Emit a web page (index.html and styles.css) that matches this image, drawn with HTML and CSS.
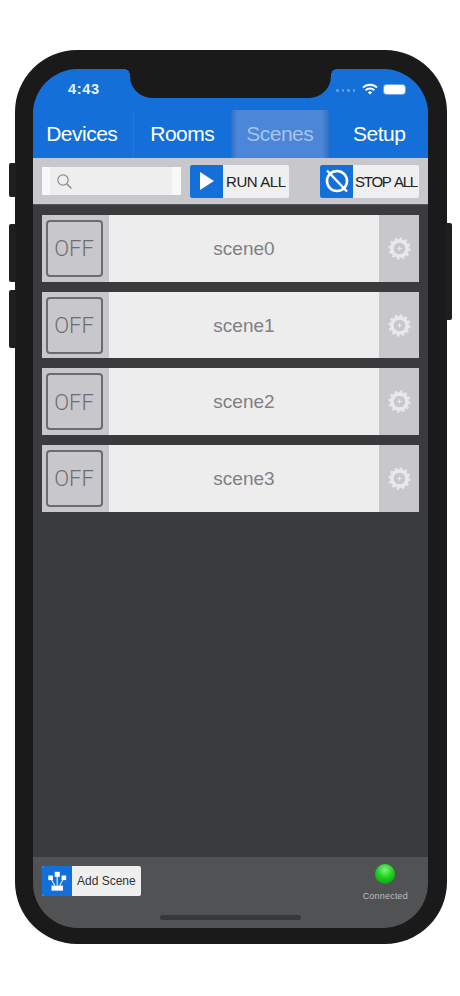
FILE: index.html
```html
<!DOCTYPE html>
<html lang="en">
<head>
    <meta charset="UTF-8">
    <meta name="viewport" content="width=device-width, initial-scale=1.0">
    <title>Scenes</title>
    <link rel="stylesheet" href="styles.css">
</head>
<body>
    <svg class="defs" width="0" height="0">
        <symbol id="gear" viewBox="0 0 26 26">
            <circle cx="13" cy="13" r="11.4" fill="none" stroke="#e9e9eb" stroke-width="2.2" stroke-dasharray="2.9 3.06"/>
            <circle cx="13" cy="13" r="8.6" fill="none" stroke="#e9e9eb" stroke-width="4"/>
            <path d="M13 9.5l.8 2.7 2.7.8-2.7.8-.8 2.7-.8-2.7-2.7-.8 2.7-.8z" fill="#e9e9eb"/>
        </symbol>
    </svg>

    <div class="phone">
        <span class="side-btn side-mute"></span>
        <span class="side-btn side-up"></span>
        <span class="side-btn side-down"></span>
        <span class="side-btn side-power"></span>

        <div class="screen">
            <div class="notch"></div>

            <div class="header">
                <div class="status-bar">
                    <span class="time">4:43</span>
                    <div class="status-icons">
                        <span class="signal"><i></i><i></i><i></i><i></i></span>
                        <svg width="16" height="12" viewBox="0 0 16 12">
                            <path d="M1 4.6a10 10 0 0 1 14 0" fill="none" stroke="#fff" stroke-width="1.9"/>
                            <path d="M3.6 7.2a6.4 6.4 0 0 1 8.8 0" fill="none" stroke="#fff" stroke-width="1.9"/>
                            <path d="M8 11.6L5.9 9.4a3 3 0 0 1 4.2 0z" fill="#fff"/>
                        </svg>
                        <span class="battery"></span>
                    </div>
                </div>
                <div class="tabs">
                    <div class="tab">Devices</div>
                    <div class="tab">Rooms</div>
                    <div class="tab tab-active">Scenes</div>
                    <div class="tab">Setup</div>
                </div>
            </div>

            <div class="toolbar">
                <div class="search">
                    <div class="search-inner">
                        <svg width="17" height="17" viewBox="0 0 17 17">
                            <circle cx="7" cy="7" r="5.2" fill="none" stroke="#8a8a8e" stroke-width="1.2"/>
                            <path d="M10.8 10.8l4.6 4.6" stroke="#8a8a8e" stroke-width="1.4"/>
                        </svg>
                    </div>
                </div>
                <div class="action-btn">
                    <span class="action-icon">
                        <svg width="16" height="20" viewBox="0 0 16 20"><path d="M1 1l14 9-14 9z" fill="#fff"/></svg>
                    </span>
                    <span class="action-label">RUN ALL</span>
                </div>
                <div class="action-btn action-stop">
                    <span class="action-icon">
                        <svg width="26" height="26" viewBox="0 0 26 26">
                            <circle cx="13" cy="13" r="10" fill="none" stroke="#fff" stroke-width="2.6"/>
                            <path d="M3 2.5l20 21" stroke="#fff" stroke-width="2.4"/>
                        </svg>
                    </span>
                    <span class="action-label">STOP ALL</span>
                </div>
            </div>

            <div class="scene-list">
                <div class="scene-row">
                    <div class="scene-toggle"><span class="off-btn">OFF</span></div>
                    <div class="scene-name">scene0</div>
                    <div class="scene-gear"><svg width="23" height="23"><use href="#gear"/></svg></div>
                </div>
                <div class="scene-row">
                    <div class="scene-toggle"><span class="off-btn">OFF</span></div>
                    <div class="scene-name">scene1</div>
                    <div class="scene-gear"><svg width="23" height="23"><use href="#gear"/></svg></div>
                </div>
                <div class="scene-row">
                    <div class="scene-toggle"><span class="off-btn">OFF</span></div>
                    <div class="scene-name">scene2</div>
                    <div class="scene-gear"><svg width="23" height="23"><use href="#gear"/></svg></div>
                </div>
                <div class="scene-row">
                    <div class="scene-toggle"><span class="off-btn">OFF</span></div>
                    <div class="scene-name">scene3</div>
                    <div class="scene-gear"><svg width="23" height="23"><use href="#gear"/></svg></div>
                </div>
            </div>

            <div class="footer">
                <div class="add-btn">
                    <span class="add-icon">
                        <svg width="22" height="22" viewBox="0 0 24 24" fill="#fff">
                            <rect x="9.5" y="2" width="5.5" height="5.5"/>
                            <rect x="2.5" y="6" width="5" height="5"/>
                            <rect x="17" y="6" width="5" height="5"/>
                            <rect x="6" y="17" width="12.5" height="5.5"/>
                            <path d="M12.2 7v10M6 10.5l3.5 6.5M18.5 10.5l-3.5 6.5" stroke="#fff" stroke-width="1.1"/>
                        </svg>
                    </span>
                    <span class="add-label">Add Scene</span>
                </div>
                <div class="conn">
                    <span class="led"></span>
                    <span class="conn-label">Connected</span>
                </div>
                <div class="home-bar"></div>
            </div>
        </div>
    </div>
</body>
</html>
```

FILE: styles.css
```css
html, body {
    margin: 0;
    padding: 0;
}
body {
    width: 460px;
    height: 996px;
    overflow: hidden;
    background: #fff;
    font-family: "Liberation Sans", Arial, sans-serif;
}
.defs {
    position: absolute;
}

/* phone shell */
.phone {
    position: relative;
    box-sizing: border-box;
    width: 432px;
    height: 894px;
    margin: 50px 0 0 15px;
    padding: 19px 19px 16px 18px;
    background: #1a1a1a;
    border-radius: 62px;
}
.side-btn {
    position: absolute;
    width: 7px;
    background: #1f1f1f;
    border-radius: 2px 0 0 2px;
}
.side-mute { left: -6px; top: 113px; height: 34px; }
.side-up { left: -6px; top: 174px; height: 58px; }
.side-down { left: -6px; top: 240px; height: 58px; }
.side-power { right: -5px; top: 173px; height: 97px; border-radius: 0 2px 2px 0; }

.screen {
    position: relative;
    display: flex;
    flex-direction: column;
    height: 859px;
    overflow: hidden;
    border-radius: 45px;
    background: #3a3b3d;
}
.notch {
    position: absolute;
    top: 0;
    left: 97px;
    width: 201px;
    height: 29px;
    background: #1a1a1a;
    border-radius: 0 0 22px 22px;
}
.notch::before, .notch::after {
    content: "";
    position: absolute;
    top: 0;
    width: 6px;
    height: 6px;
    background: radial-gradient(circle at 0 100%, transparent 6px, #1a1a1a 6px);
}
.notch::before { left: -6px; }
.notch::after {
    right: -6px;
    background: radial-gradient(circle at 100% 100%, transparent 6px, #1a1a1a 6px);
}

/* blue header */
.header {
    background: #1470d8;
    color: #fff;
}
.status-bar {
    display: flex;
    justify-content: space-between;
    align-items: center;
    height: 41px;
    padding: 0 21px 1px 35px;
    box-sizing: border-box;
}
.time {
    font-size: 14.5px;
    font-weight: bold;
    letter-spacing: .7px;
    opacity: .92;
}
.status-icons {
    display: flex;
    align-items: center;
    gap: 6px;
}
.signal {
    display: flex;
    gap: 3px;
    margin-top: 3px;
    margin-right: 1px;
}
.signal i {
    width: 2.5px;
    height: 2.5px;
    border-radius: 50%;
    background: #5f9fe6;
}
.battery {
    position: relative;
    width: 21px;
    height: 9px;
    background: #fff;
    border-radius: 3px;
    margin-right: 2px;
    box-shadow: 0 0 0 1px #6aa5e8;
}
.tabs {
    display: flex;
    height: 48px;
}
.tab {
    flex: 1;
    display: flex;
    align-items: center;
    justify-content: center;
    font-size: 21px;
    letter-spacing: -.5px;
}
.tab:first-child {
    padding-right: 2px;
    border-right: 1px solid rgba(255,255,255,.06);
}
.tab:last-child {
    padding-left: 2px;
}
.tab-active {
    color: #a9c3e6;
    background: linear-gradient(90deg, #2f6fc0 0, #4b86d8 6px, #4b86d8 91px, #2f6fc0 100%);
}

/* toolbar */
.toolbar {
    display: flex;
    align-items: center;
    height: 47px;
    padding: 0 9px;
    background: #c8c8cc;
    border-bottom: 1px solid #55565a;
    box-sizing: border-box;
}
.search {
    box-sizing: border-box;
    width: 139px;
    height: 28px;
    padding: 0 9px 0 8px;
    background: #f8f8f9;
    margin-right: 9px;
}
.search-inner {
    display: flex;
    align-items: center;
    height: 100%;
    padding-left: 6px;
    background: #eeeeef;
}
.action-btn {
    display: flex;
    align-items: center;
    width: 99px;
    height: 33px;
    background: #efeff0;
    border-radius: 2px;
    overflow: hidden;
}
.action-stop {
    margin-left: 31px;
}
.action-icon {
    flex: none;
    display: flex;
    align-items: center;
    justify-content: center;
    width: 33px;
    height: 100%;
    background: #1470d8;
}
.action-label {
    margin-left: 3px;
    font-size: 15px;
    letter-spacing: -.4px;
    color: #222;
    white-space: nowrap;
}
.action-stop .action-label {
    margin-left: 2px;
    letter-spacing: -1.25px;
    word-spacing: 1.5px;
}

/* scene rows */
.scene-list {
    flex: 1;
    display: flex;
    flex-direction: column;
    gap: 10px;
    padding: 10px 9px 0;
}
.scene-row {
    display: flex;
    height: 66.7px;
    background: #ededee;
}
.scene-toggle {
    flex: none;
    display: flex;
    align-items: center;
    justify-content: center;
    box-sizing: border-box;
    width: 67px;
    padding-right: 3px;
    background: #c8c8cc;
}
.off-btn {
    box-sizing: border-box;
    display: flex;
    align-items: center;
    justify-content: center;
    width: 57px;
    height: 57px;
    border: 2px solid #6c6c70;
    border-radius: 4px;
    padding-top: 1px;
    font-family: Roboto, "Liberation Sans", sans-serif;
    font-weight: 300;
    font-size: 22px;
    color: #6e6e72;
}
.scene-name {
    flex: 1;
    display: flex;
    align-items: center;
    justify-content: center;
    padding-top: 1px;
    font-size: 19px;
    color: #808084;
}
.scene-gear {
    flex: none;
    display: flex;
    align-items: center;
    justify-content: center;
    width: 40px;
    background: #c8c8cc;
}

/* footer */
.footer {
    position: relative;
    display: flex;
    justify-content: space-between;
    align-items: flex-start;
    height: 71px;
    padding: 9px 20px 0 9px;
    box-sizing: border-box;
    background: #505254;
}
.add-btn {
    display: flex;
    align-items: center;
    width: 99px;
    height: 30px;
    background: #efeff0;
    border-radius: 2px;
    overflow: hidden;
}
.add-icon {
    flex: none;
    display: flex;
    align-items: center;
    justify-content: center;
    width: 30px;
    height: 100%;
    background: #1470d8;
}
.add-label {
    margin-left: 5px;
    font-size: 12px;
    color: #333;
    white-space: nowrap;
}
.conn {
    display: flex;
    flex-direction: column;
    align-items: center;
    gap: 7px;
    margin-top: -2px;
}
.led {
    width: 20px;
    height: 20px;
    border-radius: 50%;
    background: radial-gradient(circle at 50% 30%, #7df57d 0, #1fd01f 45%, #0b8f14 100%);
}
.conn-label {
    font-size: 9px;
    letter-spacing: .2px;
    color: #bdbdbf;
}
.home-bar {
    position: absolute;
    left: 127px;
    bottom: 8px;
    width: 141px;
    height: 5px;
    border-radius: 3px;
    background: #37383a;
}
```
